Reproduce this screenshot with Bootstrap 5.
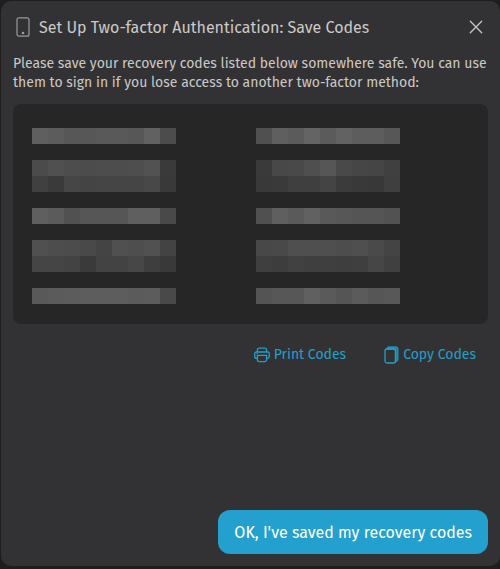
<!DOCTYPE html>
<html lang="en">
<head>
<meta charset="utf-8">
<meta name="viewport" content="width=device-width, initial-scale=1">
<title>Set Up Two-factor Authentication</title>
<link href="https://cdn.jsdelivr.net/npm/bootstrap@5.3.0/dist/css/bootstrap.min.css" rel="stylesheet">
<style>
body{background:#1e1e1f;color:#ccc9c6;font-family:"Fira Sans","Noto Sans",sans-serif;font-size:14px;line-height:19px;padding:1px 0 3px 1px}
.dialog-box{background:#323234;border-radius:10px;padding:12px}
.dialog-title{font-size:16px;line-height:26px;font-weight:400;padding-top:2px}
.dialog-head{height:28px;margin-bottom:13px}
.phone{margin:0 9px 0 3px;color:#999}
.close-x{color:#c8c8c8;width:24px;height:24px}
.codes{background:#262626;border-radius:8px;padding:24px 19px 20px;gap:16px 11px;display:grid;grid-template-columns:1fr 1fr;margin-top:12px}
.code{display:grid;grid-template-columns:repeat(9,16px);grid-auto-rows:16px}
.tools{gap:38px;margin:21px 12px 0 0}
.tool{color:#249fca;font-size:14px;line-height:20px;gap:4px}
.tool:hover{color:#4bb8dc}
.confirm{background:#24a0ce;color:#fff;border-radius:12px;font-size:16px;line-height:24px;padding:11px 16px 9px}
.confirm:hover{background:#1b8fba;color:#fff}
</style>
<script src="https://cdn.jsdelivr.net/npm/bootstrap@5.3.0/dist/js/bootstrap.bundle.min.js" defer></script>
</head>
<body class="min-vh-100 d-flex flex-column">
<main class="dialog-box flex-grow-1 d-flex flex-column" role="dialog" aria-labelledby="dialogTitle">
  <header class="dialog-head d-flex align-items-center">
    <svg class="phone flex-shrink-0" width="14" height="20" viewBox="0 0 14 20" fill="none" stroke="currentColor" aria-hidden="true"><rect x="1" y=".8" width="12" height="18.4" rx="2" stroke-width="1.2"/><circle cx="7" cy="16" r="1.3" fill="currentColor" stroke="none"/></svg>
    <h1 class="dialog-title mb-0 text-nowrap" id="dialogTitle">Set Up Two-factor Authentication: Save Codes</h1>
    <button type="button" class="close-x btn border-0 p-0 ms-auto d-flex align-items-center justify-content-center" aria-label="Close">
      <svg width="14" height="14" viewBox="0 0 14 14" stroke="currentColor" stroke-width="1.3" stroke-linecap="round"><path d="M1.3 1.3 12.7 12.7M12.7 1.3 1.3 12.7"/></svg>
    </button>
  </header>
  <p class="m-0">Please save your recovery codes listed below somewhere safe. You can use them to sign in if you lose access to another two-factor method:</p>
  <section class="codes" id="codes" aria-label="Recovery codes"></section>
  <div class="tools d-flex justify-content-end">
    <button type="button" class="tool btn border-0 p-0 d-flex align-items-center">
      <svg width="16" height="16" viewBox="0 0 16 16" fill="none" stroke="currentColor" stroke-width="1.3" stroke-linejoin="round" aria-hidden="true"><path d="M3.4 5V3Q3.4 1.2 5.2 1.2H10.8Q12.6 1.2 12.6 3V5"/><path d="M3.4 11.4H2.5Q.7 11.4.7 9.6V6.8Q.7 5 2.5 5H13.5Q15.3 5 15.3 6.8V9.6Q15.3 11.4 13.5 11.4H12.6"/><path d="M3.4 8.3H12.6V12.8Q12.6 14.6 10.8 14.6H5.2Q3.4 14.6 3.4 12.8Z"/><path d="M2.6 6.7H4"/></svg>
      Print Codes
    </button>
    <button type="button" class="tool btn border-0 p-0 d-flex align-items-center">
      <svg width="15" height="18" viewBox="0 0 15 18" fill="none" stroke="currentColor" stroke-width="1.3" aria-hidden="true"><path d="M3 3Q3.2 1 5.2 1H11.7Q13.9 1 13.9 3.2V13Q13.9 15 11.5 15.5V5Q11.5 3 9.5 3Z" fill="currentColor" fill-opacity=".65" stroke-opacity=".8"/><rect x="1" y="3" width="10.5" height="14" rx="2"/></svg>
      Copy Codes
    </button>
  </div>
  <footer class="d-flex justify-content-end mt-auto">
    <button type="button" class="confirm btn border-0">OK, I've saved my recovery codes</button>
  </footer>
</main>
<script>
// Grey level of every tile of each masked code, one string per row of tiles.
const masked = [
  ["5f5c5757595957614c"], ["505f5b645b625d5d57"],
  ["4b504d4c4d4d4e523a", "403a46444545454839"], ["3a48494f5649464540", "393a3f3f443b39383f"],
  ["5f5b515656565f5f49"], ["505f5a615957555552"],
  ["504d4c4944504e5143", "4545433a4343473e39"], ["48494f4f4f4d4f4a44", "3f3d413f3f3e3f4640"],
  ["595b5c5d5d5d5b5c49"], ["545757605a555b5658"]
];
const panel = document.getElementById("codes");
masked.forEach((rows, i) => {
  const code = document.createElement("div");
  code.className = "code";
  code.setAttribute("role", "img");
  code.setAttribute("aria-label", "Hidden code " + (i + 1));
  rows.join("").match(/../g).forEach(level => {
    const tile = document.createElement("span");
    tile.style.backgroundColor = "#" + level + level + level;
    code.append(tile);
  });
  panel.append(code);
});
</script>
</body>
</html>
